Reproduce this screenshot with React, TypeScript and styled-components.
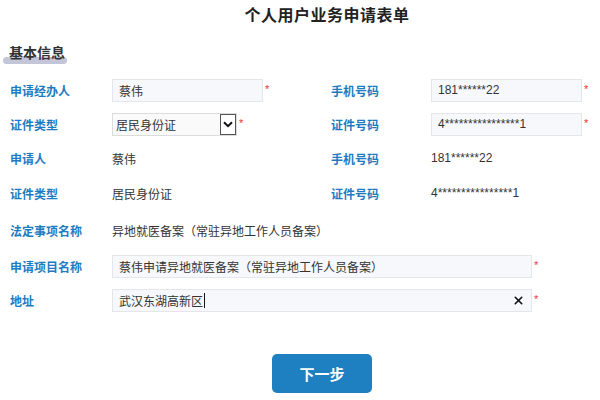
import styled, { createGlobalStyle } from "styled-components";
import { X } from "lucide-react";

const GlobalStyle = createGlobalStyle`
  body {
    margin: 0;
    background: #fff;
    font-family: "Liberation Sans", "Noto Sans CJK SC", sans-serif;
    color: #333;
  }
`;

const Page = styled.div`
  width: 600px;
  height: 400px;
  padding: 0 0 0 10px;
  box-sizing: border-box;
  overflow: hidden;
`;

const Title = styled.h1`
  margin: 0;
  padding-top: 3px;
  padding-left: 44px;
  font-size: 16px;
  line-height: 22px;
  letter-spacing: 0.5px;
  font-weight: bold;
  color: #222;
  text-align: center;
  font-family: "Noto Sans CJK SC", sans-serif;
`;

const Section = styled.div`
  display: flex;
  flex-direction: column;
  align-items: flex-start;
  margin: 17px 0 0 -7px;
`;

const SectionText = styled.h2`
  position: relative;
  z-index: 1;
  margin: 0 0 0 6px;
  font-size: 14px;
  line-height: 20px;
  font-weight: bold;
  color: #333;
  font-family: "Noto Sans CJK SC", sans-serif;
`;

const Underline = styled.div`
  width: 64px;
  height: 7px;
  margin-top: -5px;
  border-radius: 4px;
  background: #c3c6d8;
`;

const Row = styled.div<{ $mt: number }>`
  display: flex;
  align-items: center;
  height: 24px;
  margin-top: ${(p) => p.$mt}px;
`;

const Label = styled.div<{ $w: number }>`
  width: ${(p) => p.$w}px;
  flex-shrink: 0;
  font-size: 12px;
  font-weight: bold;
  color: #1f7bc1;
  font-family: "Noto Sans CJK SC", sans-serif;
`;

const Field = styled.div<{ $w?: number }>`
  display: flex;
  align-items: center;
  width: ${(p) => (p.$w ? `${p.$w}px` : "auto")};
  flex-shrink: 0;
`;

const Input = styled.div<{ $w: number }>`
  display: flex;
  align-items: center;
  width: ${(p) => p.$w}px;
  height: 23px;
  box-sizing: border-box;
  padding: 0 6px;
  background: #f6f8fb;
  border: 1px solid #e4e6eb;
  font-size: 12px;
  color: #333;
  white-space: nowrap;
`;

const Caret = styled.span`
  display: inline-block;
  width: 1px;
  height: 15px;
  background: #111;
  margin-left: 1px;
`;

const Clear = styled.span`
  margin-left: auto;
  display: flex;
  color: #111;
`;

const Star = styled.span`
  color: #e33;
  font-size: 11px;
  margin-left: 2px;
  margin-top: -3px;
`;

const Select = styled.div`
  display: flex;
  align-items: center;
  width: 125px;
  height: 23px;
  box-sizing: border-box;
  padding-left: 3px;
  background: #fafafa;
  border: 1px solid #dcdcdc;
  font-size: 12px;
  color: #333;
`;

const SelectText = styled.span`
  flex: 1;
`;

const Arrow = styled.span`
  display: flex;
  align-items: center;
  justify-content: center;
  width: 16px;
  height: 21px;
  box-sizing: border-box;
  border: 1px solid #555;
  background: #fff;
`;

const Value = styled.div`
  font-size: 12px;
  color: #333;
`;

const Footer = styled.div`
  display: flex;
  padding-left: 262px;
  margin-top: 42px;
`;

const NextButton = styled.button`
  width: 100px;
  height: 39px;
  border: none;
  border-radius: 5px;
  background: #1e80c1;
  color: #fff;
  font-size: 15px;
  font-weight: bold;
  font-family: "Noto Sans CJK SC", sans-serif;
`;

const App = () => {
  return (
    <Page>
      <GlobalStyle />
      <Title>个人用户业务申请表单</Title>
      <Section>
        <SectionText>基本信息</SectionText>
        <Underline />
      </Section>

      <Row $mt={14}>
        <Label $w={102}>申请经办人</Label>
        <Field $w={219}>
          <Input $w={151}>蔡伟</Input>
          <Star>*</Star>
        </Field>
        <Label $w={100}>手机号码</Label>
        <Field>
          <Input $w={151}>181******22</Input>
          <Star>*</Star>
        </Field>
      </Row>

      <Row $mt={10}>
        <Label $w={102}>证件类型</Label>
        <Field $w={219}>
          <Select>
            <SelectText>居民身份证</SelectText>
            <Arrow>
              <svg width="10" height="7" viewBox="0 0 10 7">
                <path d="M1 1.2 L5 5.2 L9 1.2" fill="none" stroke="#111" strokeWidth="2" />
              </svg>
            </Arrow>
          </Select>
          <Star>*</Star>
        </Field>
        <Label $w={100}>证件号码</Label>
        <Field>
          <Input $w={151}>4****************1</Input>
          <Star>*</Star>
        </Field>
      </Row>

      <Row $mt={10}>
        <Label $w={102}>申请人</Label>
        <Field $w={219}>
          <Value>蔡伟</Value>
        </Field>
        <Label $w={100}>手机号码</Label>
        <Value>181******22</Value>
      </Row>

      <Row $mt={11}>
        <Label $w={102}>证件类型</Label>
        <Field $w={219}>
          <Value>居民身份证</Value>
        </Field>
        <Label $w={100}>证件号码</Label>
        <Value>4****************1</Value>
      </Row>

      <Row $mt={13}>
        <Label $w={102}>法定事项名称</Label>
        <Value>异地就医备案（常驻异地工作人员备案）</Value>
      </Row>

      <Row $mt={12}>
        <Label $w={102}>申请项目名称</Label>
        <Field>
          <Input $w={420}>蔡伟申请异地就医备案（常驻异地工作人员备案）</Input>
          <Star>*</Star>
        </Field>
      </Row>

      <Row $mt={10}>
        <Label $w={102}>地址</Label>
        <Field>
          <Input $w={420}>
            武汉东湖高新区
            <Caret />
            <Clear>
              <X size={13} strokeWidth={3} />
            </Clear>
          </Input>
          <Star>*</Star>
        </Field>
      </Row>

      <Footer>
        <NextButton>下一步</NextButton>
      </Footer>
    </Page>
  );
};

export default App;
